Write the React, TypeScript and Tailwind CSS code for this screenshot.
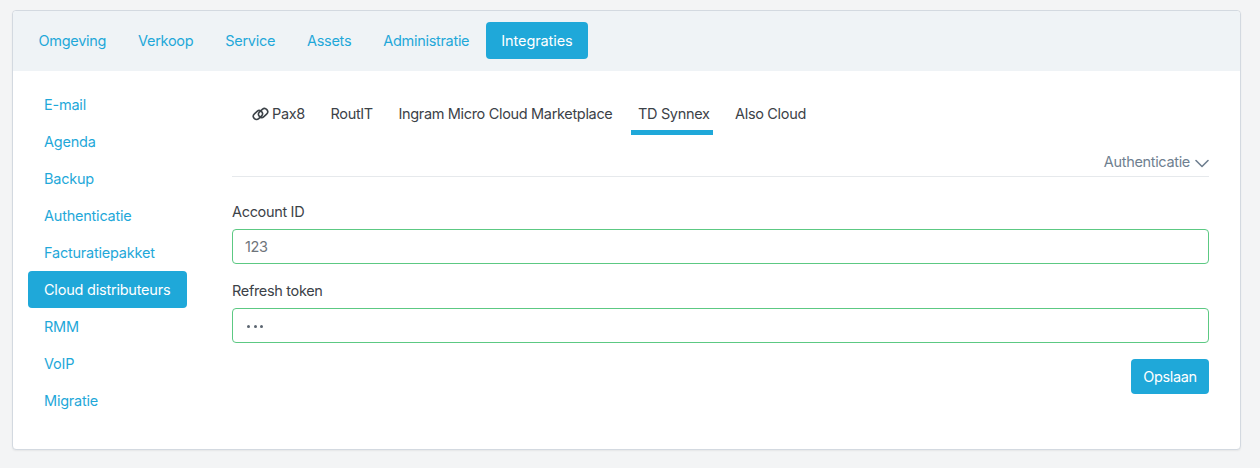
const topNav = ["Omgeving", "Verkoop", "Service", "Assets", "Administratie", "Integraties"];
const sideNav = ["E-mail", "Agenda", "Backup", "Authenticatie", "Facturatiepakket", "Cloud distributeurs", "RMM", "VoIP", "Migratie"];
const tabs = ["Pax8", "RoutIT", "Ingram Micro Cloud Marketplace", "TD Synnex", "Also Cloud"];

function LinkIcon() {
  return (
    <svg width="17" height="14" viewBox="0 0 17 14" fill="none" stroke="#3c4248" strokeWidth="1.6" className="mr-[3px]">
      <rect x="0.9" y="4.8" width="10" height="6.4" rx="3.2" transform="rotate(-42 5.9 8)" />
      <rect x="6.1" y="2.8" width="10" height="6.4" rx="3.2" transform="rotate(-42 11.1 6)" />
    </svg>
  );
}

function Chevron() {
  return (
    <svg width="14" height="9" viewBox="0 0 14 9" fill="none" stroke="#6f7f90" strokeWidth="1.6" strokeLinecap="round" strokeLinejoin="round" className="ml-[5px] mt-[2px]">
      <path d="M1 1.5 L7 7.5 L13 1.5" />
    </svg>
  );
}

export default function App() {
  return (
    <div className="h-[468px] overflow-hidden bg-[#f3f4f5] pt-2.5 pl-3 pr-[19px] font-['Inter',sans-serif] text-[14.5px] tracking-[-0.33px]">
      <div className="h-[440px] rounded-[4px] border border-[#d3d9e0] bg-white shadow-[0_1px_2px_rgba(0,0,0,0.06)]">
        <div className="flex h-[60px] items-center gap-px rounded-t-[4px] bg-[#eff3f6] pl-[10px] pb-[2px] tracking-[-0.3px]">
          {topNav.map((n) => (
            <div
              key={n}
              className={`flex h-[37px] items-center rounded-[4px] px-[15.5px] pt-[1px] ${n === "Integraties" ? "bg-[#1fa8d9] tracking-[-0.1px] text-white" : "text-[#1fa8d9]"}`}
            >
              {n}
            </div>
          ))}
        </div>

        <div className="flex">
          <div className="mt-[15px] ml-[15px] w-[159px] shrink-0 tracking-[-0.22px]">
            {sideNav.map((n) => (
              <div
                key={n}
                className={`flex h-[37px] items-center whitespace-nowrap rounded-[4px] px-4 ${n === "Cloud distributeurs" ? "bg-[#1fa8d9] text-white" : "text-[#1fa8d9]"}`}
              >
                {n}
              </div>
            ))}
          </div>

          <div className="ml-[45px] w-[977px]">
            <div className="mt-5 flex h-[44px] pl-[13px] text-[#3c4248]">
              {tabs.map((t) => (
                <div
                  key={t}
                  className={`flex h-[44px] items-center border-b-[5px] pl-[7px] pr-[3px] pt-[7px] ${t === "TD Synnex" ? "border-[#1fa8d9]" : "border-transparent"} ${t === "Pax8" ? "" : "ml-[15.5px]"}`}
                >
                  {t === "Pax8" && <LinkIcon />}
                  {t}
                </div>
              ))}
            </div>

            <div className="mt-[15px] flex h-[27px] items-start justify-end border-b border-[#e6e9ec] text-[#6f7f90]">
              <span className="flex items-center leading-[24px]">
                Authenticatie
                <Chevron />
              </span>
            </div>

            <label className="mt-[25px] block leading-[20px] text-[#3c4248]">Account ID</label>
            <div className="mt-[7px] flex h-[35px] items-center rounded-[4px] border border-[#5cc983] px-3 text-[#6e747a]">123</div>

            <label className="mt-[17px] block leading-[20px] text-[#3c4248]">Refresh token</label>
            <div className="mt-[7px] flex h-[35px] items-center rounded-[4px] border border-[#5cc983] pl-[14px] pr-3">
              <span className="mt-[2px] flex gap-[3.5px]">
                <span className="h-[3px] w-[3px] rounded-full bg-[#5b6570]" />
                <span className="h-[3px] w-[3px] rounded-full bg-[#5b6570]" />
                <span className="h-[3px] w-[3px] rounded-full bg-[#5b6570]" />
              </span>
            </div>

            <div className="mt-4 flex justify-end">
              <button className="h-[35px] w-[78px] rounded-[4px] bg-[#1fa8d9] text-white">Opslaan</button>
            </div>
          </div>
        </div>
      </div>
    </div>
  );
}
